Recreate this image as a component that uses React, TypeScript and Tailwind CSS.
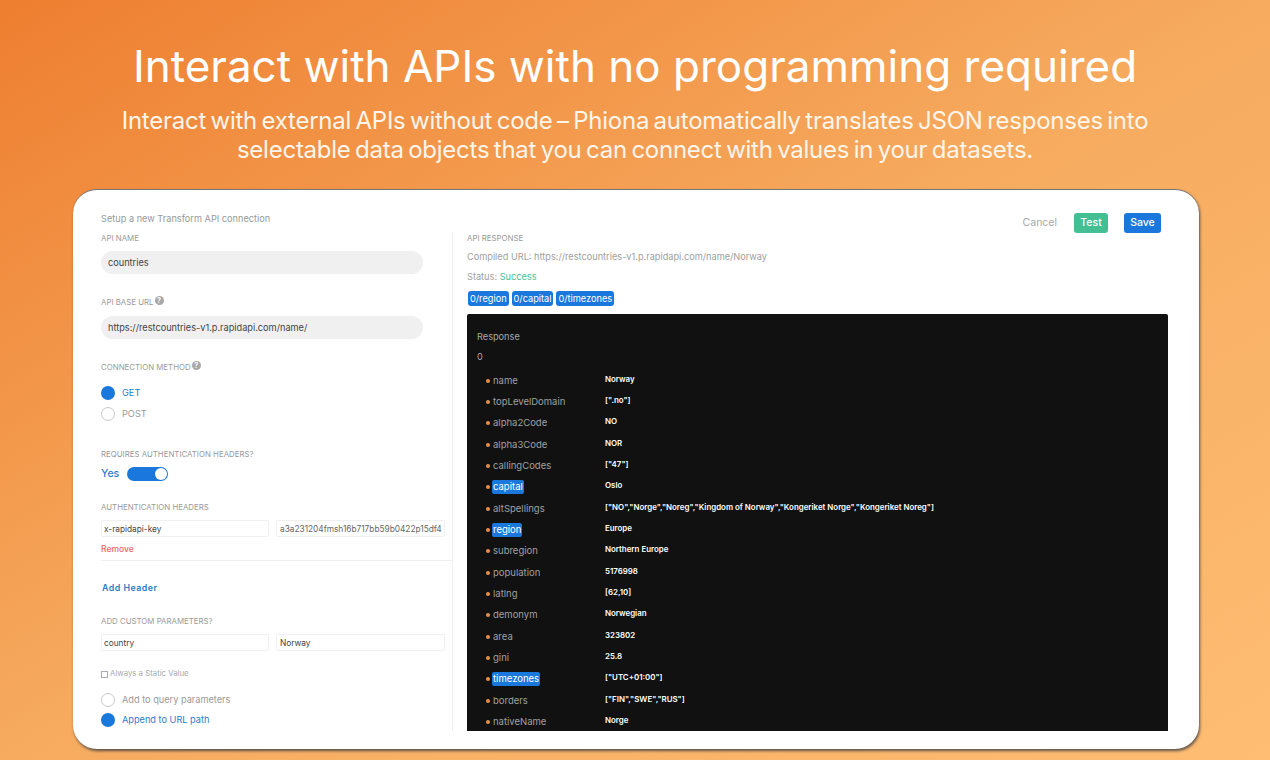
const font = "font-['Inter','Liberation_Sans',sans-serif]";

function Label({ children, className = "" }: { children: React.ReactNode; className?: string }) {
  return <div className={`h-[14px] text-[7.85px] leading-[14px] text-[#9a9a9a] whitespace-nowrap flex items-center ${className}`}>{children}</div>;
}

function Help() {
  return (
    <span className="ml-[1px] -mt-[3px] w-[9px] h-[9px] rounded-full bg-[#a8a8a8] text-white text-[7px] leading-[9px] text-center font-bold">?</span>
  );
}

function Radio({ on, label, className = "" }: { on?: boolean; label: string; className?: string }) {
  return (
    <div className={`flex items-center h-[14px] ${className}`}>
      <span className={`w-[14px] h-[14px] rounded-full ${on ? "bg-[#1a78dc]" : "bg-white border border-[#c8c8c8]"}`} />
      <span className={`ml-[7px] text-[9.2px] ${on ? "text-[#2b7cc9]" : "text-[#999999]"}`}>{label}</span>
    </div>
  );
}

function SmallInput({ children, className = "" }: { children: React.ReactNode; className?: string }) {
  return (
    <div className={`h-[17px] border border-[#f0f0f0] rounded-[2px] text-[8.3px] leading-[16px] text-[#444] overflow-hidden whitespace-nowrap ${className}`}>
      {children}
    </div>
  );
}

const rows: [string, string, boolean?][] = [
  ["name", "Norway"],
  ["topLevelDomain", '[".no"]'],
  ["alpha2Code", "NO"],
  ["alpha3Code", "NOR"],
  ["callingCodes", '["47"]'],
  ["capital", "Oslo", true],
  ["altSpellings", '["NO","Norge","Noreg","Kingdom of Norway","Kongeriket Norge","Kongeriket Noreg"]'],
  ["region", "Europe", true],
  ["subregion", "Northern Europe"],
  ["population", "5176998"],
  ["latlng", "[62,10]"],
  ["demonym", "Norwegian"],
  ["area", "323802"],
  ["gini", "25.8"],
  ["timezones", '["UTC+01:00"]', true],
  ["borders", '["FIN","SWE","RUS"]'],
  ["nativeName", "Norge"],
];

export default function App() {
  return (
    <div className={`${font} w-[1270px] h-[760px] overflow-hidden bg-[linear-gradient(to_bottom_right,#ee7e30_0%,#f6ab5f_50%,#febd73_100%)] flex flex-col`}>
      <h1 className="mt-[38px] h-[56px] text-center text-white text-[44px] leading-[56px] font-normal whitespace-nowrap">
        Interact with APIs with no programming required
      </h1>
      <p className="mt-[12px] h-[58px] text-center text-[#fff5ea] text-[24px] leading-[29px] tracking-[-0.25px] [word-spacing:-2px]">
        Interact with external APIs without code – Phiona automatically translates JSON responses into
        <br />
        selectable data objects that you can connect with values in your datasets.
      </p>
      <div className="ml-[73px] mt-[25px] w-[1126px] h-[560px] bg-white rounded-[24px] border-t border-[#777] shadow-[1px_2px_3px_rgba(40,50,60,0.75)] flex flex-col pl-[28px] pr-[31px]">
        <div className="h-[43px] flex items-start justify-between">
          <div className="mt-[22px] text-[9.2px] leading-[13px] text-[#999]">Setup a new Transform API connection</div>
          <div className="mt-[23px] mr-[7px] flex items-center text-[10.5px] font-medium">
            <span className="text-[#a8a8a8] font-normal">Cancel</span>
            <span className="ml-[17px] w-[34px] h-[20px] rounded-[3px] bg-[#43bf93] text-white text-center leading-[20px]">Test</span>
            <span className="ml-[16px] w-[37px] h-[20px] rounded-[3px] bg-[#1a78dc] text-white text-center leading-[20px]">Save</span>
          </div>
        </div>
        <div className="flex h-[498px]">
          <div className="w-[352px] border-r border-[#eeeeee] shrink-0">
            <Label className="mt-[-2px]">API NAME</Label>
            <div className="mt-[6px] w-[322px] h-[23px] rounded-full bg-[#f0f0f0] pl-[7px] text-[9.2px] leading-[24px] text-[#444]">countries</div>
            <Label className="mt-[21px]">API BASE URL<Help /></Label>
            <div className="mt-[7px] w-[322px] h-[23px] rounded-full bg-[#f0f0f0] pl-[7px] text-[9.2px] leading-[24px] text-[#444]">https://restcountries-v1.p.rapidapi.com/name/</div>
            <Label className="mt-[21px]">CONNECTION METHOD<Help /></Label>
            <Radio on label="GET" className="mt-[12px]" />
            <Radio label="POST" className="mt-[7px]" />
            <Label className="mt-[26px]">REQUIRES AUTHENTICATION HEADERS?</Label>
            <div className="mt-[6px] h-[14px] flex items-center">
              <span className="text-[10.5px] text-[#2b7cc9] font-medium">Yes</span>
              <span className="ml-[8px] w-[41px] h-[14px] rounded-full bg-[#1a78dc] flex items-center justify-end pr-[1px]">
                <span className="w-[12px] h-[12px] rounded-full bg-white" />
              </span>
            </div>
            <Label className="mt-[19px]">AUTHENTICATION HEADERS</Label>
            <div className="mt-[6px] flex gap-[7px]">
              <SmallInput className="w-[168px] pl-[2px]">x-rapidapi-key</SmallInput>
              <SmallInput className="w-[169px] pl-[3px]"><span className="text-[#666]">a3a231204fmsh16b717bb59b0422p15df4</span></SmallInput>
            </div>
            <div className="mt-[6px] h-[12px] text-[8.5px] leading-[12px] font-medium text-[#ef6468]">Remove</div>
            <div className="mt-[5px] h-px bg-[#efefef]" />
            <div className="mt-[21px] ml-[1px] h-[12px] text-[8.8px] leading-[12px] font-semibold tracking-[0.5px] text-[#2b7cc9]">Add Header</div>
            <Label className="mt-[20px]">ADD CUSTOM PARAMETERS?</Label>
            <div className="mt-[6px] flex gap-[7px]">
              <SmallInput className="w-[168px] pl-[2px]">country</SmallInput>
              <SmallInput className="w-[169px] pl-[3px]">Norway</SmallInput>
            </div>
            <div className="mt-[17px] h-[12px] flex items-center">
              <span className="w-[7px] h-[7px] border border-[#aaa]" />
              <span className="ml-[2px] text-[7.8px] text-[#aaa]">Always a Static Value</span>
            </div>
            <Radio label="Add to query parameters" className="mt-[13px]" />
            <Radio on label="Append to URL path" className="mt-[6px]" />
          </div>
          <div className="ml-[14px] flex-1 min-w-0">
            <Label className="mt-[-2px]">API RESPONSE</Label>
            <div className="mt-[5px] h-[13px] text-[9.2px] leading-[13px] text-[#a0a0a0] whitespace-nowrap">Compiled URL: https://restcountries-v1.p.rapidapi.com/name/Norway</div>
            <div className="mt-[7px] h-[13px] text-[9.2px] leading-[13px] text-[#a0a0a0]">Status: <span className="text-[#43bf93]">Success</span></div>
            <div className="mt-[8px] ml-[1px] flex gap-[3px]">
              {["0/region", "0/capital", "0/timezones"].map((c) => (
                <span key={c} className="h-[15px] rounded-[3px] bg-[#1a78dc] px-[2px] text-white text-[9.2px] leading-[15px]">{c}</span>
              ))}
            </div>
            <div className="mt-[8px] h-[417px] bg-[#111111] rounded-t-[2px] overflow-hidden pl-[10px] pt-[16px]">
              <div className="h-[12px] text-[9.2px] leading-[13px] text-[#a8a8a8]">Response</div>
              <div className="mt-[8px] h-[12px] text-[9.2px] leading-[13px] text-[#a8a8a8]">0</div>
              <div className="mt-[8px] flex flex-col">
                {rows.map(([k, v, hl]) => (
                  <div key={k} className="h-[21.33px] flex items-center">
                    <span className="ml-[9px] w-[4px] h-[4px] rounded-full bg-[#ef8d45] shrink-0" />
                    <span className="ml-[2px] w-[113px] shrink-0 flex">
                      <span className={`px-[1px] rounded-[2px] text-[9.5px] leading-[14px] ${hl ? "bg-[#1a78dc] text-white" : "text-[#a0a0a0]"}`}>{k}</span>
                    </span>
                    <span className="-mt-[2px] text-[7.9px] font-semibold text-white whitespace-nowrap">{v}</span>
                  </div>
                ))}
              </div>
            </div>
          </div>
        </div>
      </div>
    </div>
  );
}
